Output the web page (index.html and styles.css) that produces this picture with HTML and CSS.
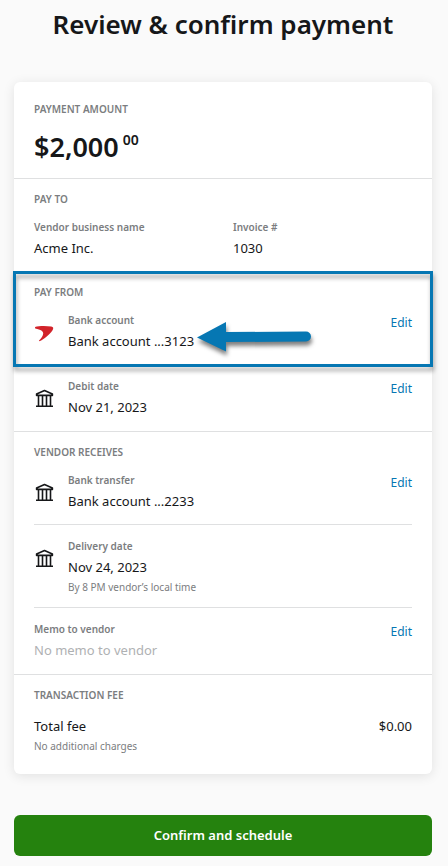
FILE: index.html
```html
<!DOCTYPE html>
<html lang="en">
<head>
<meta charset="utf-8">
<meta name="viewport" content="width=device-width, initial-scale=1">
<title>Review &amp; confirm payment</title>
<link rel="stylesheet" href="styles.css">
</head>
<body>
<svg class="sprite" aria-hidden="true">
  <symbol id="bank" viewBox="0 0 20 20">
    <path d="M2.600 6.400V5L10.500 1.500L18.400 5V6.400Z M4.500 6.500V17 M8.500 6.500V17 M12.500 6.500V17 M16.500 6.500V17 M2 17.200H19" fill="none" stroke="currentColor" stroke-width="1.6" stroke-linejoin="round"/>
  </symbol>
</svg>
<main class="page">
  <h1 class="title">Review &amp; confirm payment</h1>
  <div class="card">
    <section class="section section-amount">
      <h2 class="heading">Payment amount</h2>
      <p class="amount">$2,000<sup class="cents">00</sup></p>
    </section>
    <section class="section">
      <h2 class="heading">Pay to</h2>
      <div class="columns">
        <div>
          <p class="label">Vendor business name</p>
          <p class="value">Acme Inc.</p>
        </div>
        <div>
          <p class="label">Invoice #</p>
          <p class="value">1030</p>
        </div>
      </div>
    </section>
    <section class="section">
      <div class="featured">
        <h2 class="heading">Pay from</h2>
        <div class="row">
          <svg class="icon" viewBox="0 0 20 20" aria-hidden="true"><path d="M1 4.100C5 2.800 12 2.800 17.200 3.600C19.500 4 19.800 5.500 18.400 7.400C15.800 11.300 10.200 16 5.400 18.300L4.900 17.700C7.600 14.900 9 12.600 9.200 10.400C9.300 8 7 6.600 1.200 5.400Z" fill="#d2232a"/></svg>
          <div class="details">
            <p class="label">Bank account</p>
            <p class="value">Bank account ...3123</p>
          </div>
          <a class="edit" href="#account">Edit</a>
        </div>
        <svg class="arrow" viewBox="0 0 120 36" aria-hidden="true"><path d="M2 18.500L31 3V13L111 12.500A5 5 0 0 1 111 22.500L31 23V32.500Z" fill="#0677b3"/></svg>
      </div>
      <div class="row">
        <svg class="icon" aria-hidden="true"><use href="#bank"/></svg>
        <div class="details">
          <p class="label">Debit date</p>
          <p class="value">Nov 21, 2023</p>
        </div>
        <a class="edit" href="#date">Edit</a>
      </div>
    </section>
    <section class="section">
      <h2 class="heading">Vendor receives</h2>
      <div class="row row-ruled">
        <svg class="icon" aria-hidden="true"><use href="#bank"/></svg>
        <div class="details">
          <p class="label">Bank transfer</p>
          <p class="value">Bank account ...2233</p>
        </div>
        <a class="edit" href="#transfer">Edit</a>
      </div>
      <div class="row row-ruled">
        <svg class="icon" aria-hidden="true"><use href="#bank"/></svg>
        <div class="details">
          <p class="label">Delivery date</p>
          <p class="value">Nov 24, 2023</p>
          <p class="note">By 8 PM vendor’s local time</p>
        </div>
      </div>
      <div class="row">
        <div class="details">
          <p class="label">Memo to vendor</p>
          <p class="value value-empty">No memo to vendor</p>
        </div>
        <a class="edit" href="#memo">Edit</a>
      </div>
    </section>
    <section class="section section-fee">
      <h2 class="heading">Transaction fee</h2>
      <div class="row">
        <div class="details">
          <p class="value">Total fee</p>
          <p class="note">No additional charges</p>
        </div>
        <p class="value">$0.00</p>
      </div>
    </section>
  </div>
  <button class="confirm" type="button">Confirm and schedule</button>
</main>
</body>
</html>
```
FILE: styles.css
```css
* { box-sizing: border-box; }

body {
  margin: 0;
  background: #fafafa;
  color: #161719;
  font-family: "Noto Sans", sans-serif;
}

h1, h2, p { margin: 0; }

.sprite { display: none; }

.page { padding: 4px 16px 8px 14px; }

.title {
  margin-bottom: 38px;
  font-size: 26px;
  font-weight: 600;
  line-height: 40px;
  text-align: center;
}

.card {
  background: #fff;
  border-radius: 6px;
  box-shadow: 0 2px 12px rgba(0, 0, 0, 0.1);
}

.section { padding: 12px 20px 0; }
.section + .section { border-top: 1px solid #dfe0e1; }

.section-amount { padding: 19px 20px 12px; }
.section-fee { padding-bottom: 7px; }

.heading {
  margin-bottom: 11px;
  color: #7b7d80;
  font-size: 10px;
  font-weight: 600;
  line-height: 16px;
  text-transform: uppercase;
}

.amount {
  display: flex;
  gap: 4px;
  font-size: 27px;
  font-weight: 600;
  line-height: 38px;
}

.cents {
  font-size: 14px;
  line-height: 24px;
}

.columns {
  display: grid;
  grid-template-columns: 1fr 179px;
  padding-bottom: 11px;
}

.row {
  display: flex;
  padding-bottom: 12px;
}

.row-ruled {
  padding-bottom: 11px;
  border-bottom: 1px solid #dfe0e1;
}

.row-ruled + .row { padding-top: 12px; }

.icon {
  flex: none;
  width: 20px;
  height: 20px;
  margin: 12px 14px 0 0;
}

.details { flex: 1; }

.label {
  color: #7b7d80;
  font-size: 10px;
  font-weight: 600;
  line-height: 18px;
}

.value {
  font-size: 13px;
  line-height: 24px;
}

.value-empty { color: #afb1b3; }

.note {
  color: #7b7d80;
  font-size: 10px;
  line-height: 17px;
}

.edit {
  color: #0677b3;
  font-size: 12px;
  line-height: 24px;
  text-decoration: none;
}

.featured {
  position: relative;
  margin-bottom: 12px;
}

.featured::after {
  content: "";
  position: absolute;
  inset: -13px -21px -2px;
  border: 3px solid #0677b3;
  filter: drop-shadow(1px 4px 2px rgba(0, 0, 0, 0.35));
  pointer-events: none;
}

.arrow {
  position: absolute;
  top: 35px;
  left: 161px;
  width: 120px;
  height: 36px;
  overflow: visible;
  filter: drop-shadow(1px 4px 2px rgba(0, 0, 0, 0.5));
}

.confirm {
  display: block;
  width: 100%;
  margin-top: 41px;
  padding: 0;
  border: 0;
  border-radius: 6px;
  background: #25820e;
  color: #fff;
  font: 600 13px/41px "Noto Sans", sans-serif;
}
```
